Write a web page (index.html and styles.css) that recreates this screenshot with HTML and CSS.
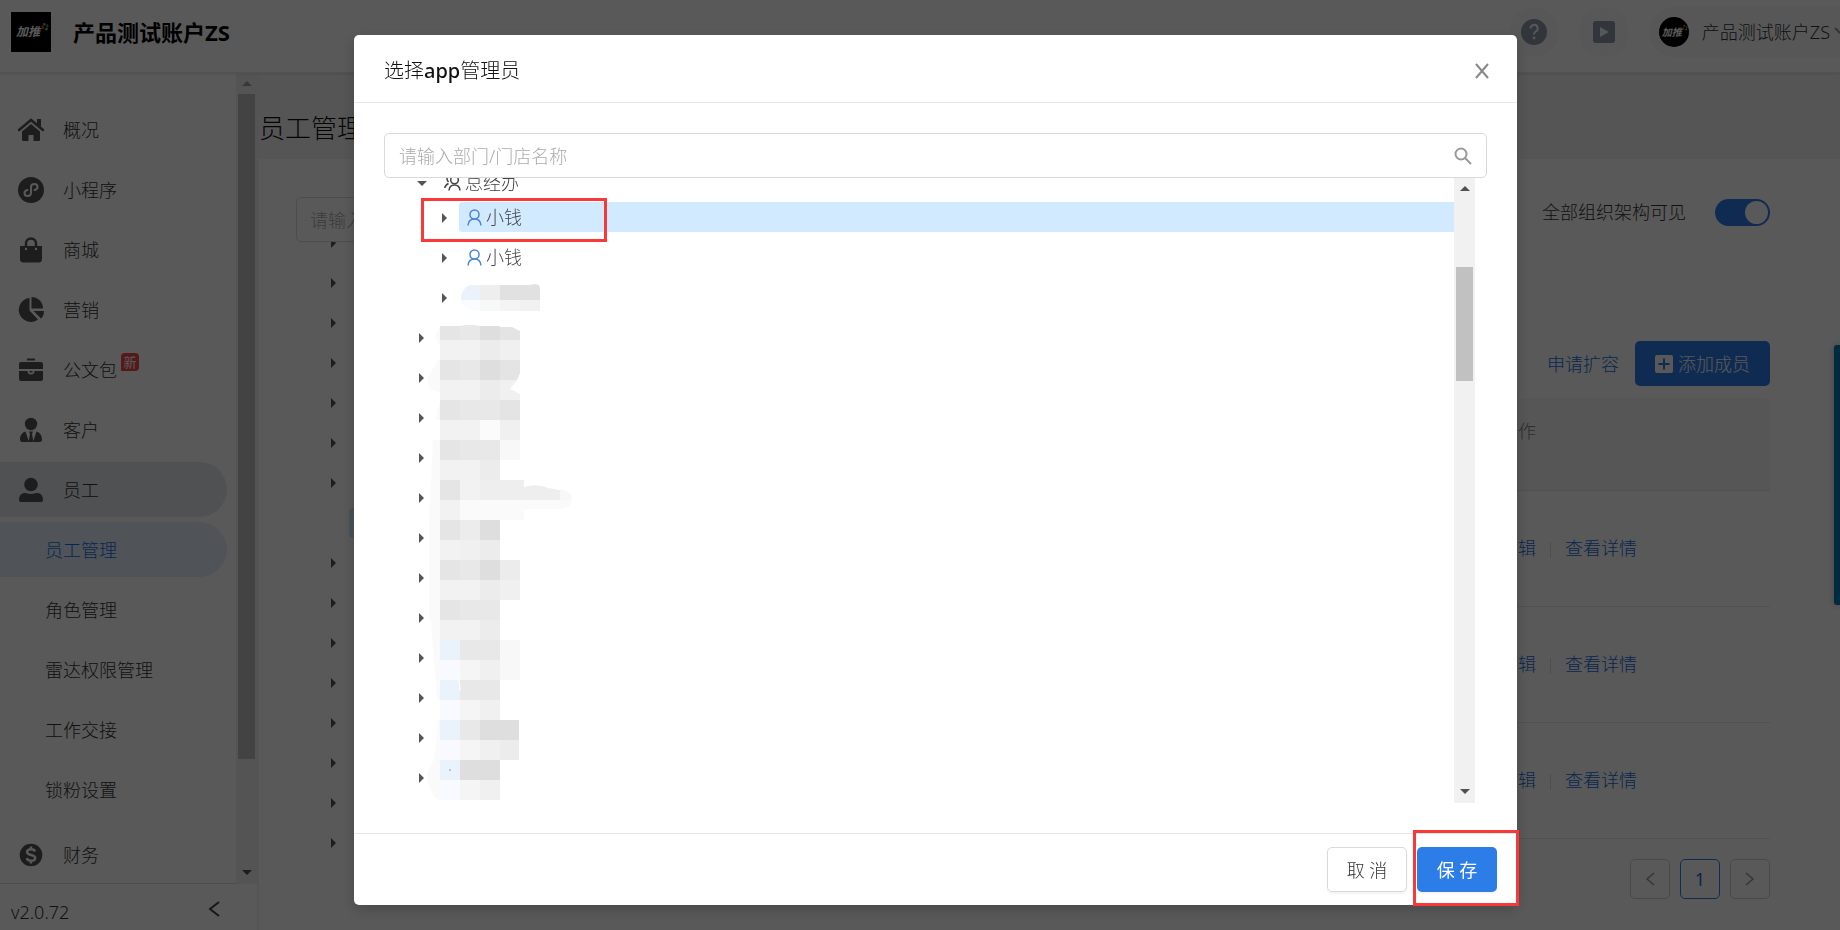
FILE: index.html
```html
<!DOCTYPE html>
<html lang="zh-CN">
<head>
    <meta charset="UTF-8">
    <meta name="viewport" content="width=device-width, initial-scale=1.0">
    <title>员工管理</title>
    <link rel="stylesheet" href="styles.css">
</head>
<body>
    <div class="app">
        <header class="header">
            <div class="logo"><span>加推</span>
                <svg class="logo-dot" viewBox="0 0 8 8"><path d="M2 1.500L4.500 1" stroke="#f80"/><path d="M5.500 1.500L7 4" stroke="#09d"/><path d="M6.500 5L4.500 7" stroke="#8c2"/><path d="M1 3L2.500 6" stroke="#e42"/></svg>
            </div>
            <h1>产品测试账户ZS</h1>
            <div class="header-right">
                <button class="round-button" aria-label="帮助">
                    <svg width="26" height="26" viewBox="0 0 26 26"><circle cx="13" cy="13" r="13" fill="#8f9bab"/><path d="M9.500 9.500a3.600 3.600 0 1 1 5.200 3.200c-1.200.7-1.700 1.200-1.700 2.800" fill="none" stroke="#fafafa" stroke-width="2"/><circle cx="13" cy="19" r="1.400" fill="#fafafa"/></svg>
                </button>
                <button class="round-button" aria-label="视频">
                    <svg width="22" height="22" viewBox="0 0 22 22"><rect width="22" height="22" rx="3" fill="#8f9bab"/><path d="M7 6l9 5-9 5z" fill="#fafafa"/></svg>
                </button>
                <button class="account">
                    <span class="avatar">加推
                        <svg class="logo-dot" viewBox="0 0 8 8"><path d="M2 1.500L4.500 1" stroke="#f80"/><path d="M5.500 1.500L7 4" stroke="#09d"/><path d="M6.500 5L4.500 7" stroke="#8c2"/><path d="M1 3L2.500 6" stroke="#e42"/></svg>
                    </span>
                    <span>产品测试账户ZS</span>
                    <svg class="caret" width="14" height="9" viewBox="0 0 14 9"><path d="M1 1l6 6 6-6" fill="none" stroke="#8f9bab" stroke-width="2"/></svg>
                </button>
            </div>
        </header>

        <div class="page">
            <aside class="sidebar">
                <div class="menu-wrap">
                    <nav class="menu">
                        <a href="#"><svg viewBox="0 0 28 28"><path d="M2 14L14 4l12 10" fill="none" stroke="#555" stroke-width="2.500" stroke-linecap="round"/><path d="M20 3h4v8l-4-3z"/><path d="M5 15.500L14 8l9 7.500V24a1 1 0 0 1-1 1h-5.500v-6h-5v6H6a1 1 0 0 1-1-1z"/></svg>概况</a>
                        <a href="#"><svg viewBox="0 0 28 28"><circle cx="14" cy="14" r="13"/><path d="M10.500 14c-2 .4-3 1.500-3 3a3 3 0 0 0 3 3c2 0 3.500-1.300 3.500-3.200v-5.600C14 9.300 15.500 8 17.500 8a3 3 0 0 1 3 3c0 1.500-1 2.600-3 3" fill="none" stroke="#fff" stroke-width="2" stroke-linecap="round"/></svg>小程序</a>
                        <a href="#"><svg viewBox="0 0 28 28"><path d="M9 11V7.500a5 5 0 0 1 10 0V11" fill="none" stroke="#555" stroke-width="2.500"/><path d="M3 10h22v13a3.500 3.500 0 0 1-3.500 3.500h-15A3.500 3.500 0 0 1 3 23z"/><g fill="#fff"><circle cx="9" cy="13" r="1.200"/><circle cx="19" cy="13" r="1.200"/></g></svg>商城</a>
                        <a href="#"><svg viewBox="0 0 28 28"><path d="M12.500 2v12.500l8.500 9A12 12 0 1 1 12.500 2z"/><path d="M14.500 1A11.500 11.500 0 0 1 26 12.500H14.500z"/><path d="M16.500 15H27c0 3-1 5.500-3 7.500z"/></svg>营销</a>
                        <a href="#"><svg viewBox="0 0 28 28"><path d="M10 2.500h8v2h-8zM4 6h20a2 2 0 0 1 2 2v5H2V8a2 2 0 0 1 2-2zM2 15h8.500a3.500 3.500 0 0 0 7 0H26v8a2 2 0 0 1-2 2H4a2 2 0 0 1-2-2z"/><path d="M12.500 15h3v1.500h-3z"/></svg>公文包<em class="badge">新</em></a>
                        <a href="#"><svg viewBox="0 0 28 28"><circle cx="14" cy="8" r="6.200"/><path d="M8.500 15.500L12 26H5.500A2.500 2.500 0 0 1 3 23.500c0-4 2-7 5.500-8zM19.500 15.500L16 26h6.500a2.500 2.500 0 0 0 2.500-2.500c0-4-2-7-5.500-8zM12 15.500h4l-1 2.500 1.500 8h-5L13 18z"/></svg>客户</a>
                        <a href="#" class="open"><svg viewBox="0 0 28 28"><circle cx="14" cy="8.500" r="6.800"/><path d="M2 24c0-4.500 2.500-7 6-7 2 0 3 1 6 1s4-1 6-1c3.500 0 6 2.500 6 7 0 1.300-.7 2-2 2H4c-1.300 0-2-.7-2-2z"/></svg>员工</a>
                        <a href="#" class="sub current">员工管理</a>
                        <a href="#" class="sub">角色管理</a>
                        <a href="#" class="sub">雷达权限管理</a>
                        <a href="#" class="sub">工作交接</a>
                        <a href="#" class="sub">锁粉设置</a>
                        <a href="#" class="finance"><svg viewBox="0 0 28 28"><circle cx="14" cy="14" r="11.300"/><path d="M18 10.500c-.5-1.500-2-2.200-4-2.200-2.300 0-4 1-4 2.700 0 4 8.200 2 8.200 6 0 1.700-1.800 2.800-4.200 2.800-2.200 0-3.800-.9-4.300-2.600M14 5.500v3M14 19.500v3" fill="none" stroke="#fff" stroke-width="2.400"/></svg>财务</a>
                    </nav>
                    <div class="scrollbar side-scroll"><i class="up"></i><div class="thumb"></div><i class="down"></i></div>
                </div>
                <div class="side-footer">
                    <span>v2.0.72</span>
                    <button aria-label="收起"><svg width="12" height="16" viewBox="0 0 12 16"><path d="M11 1L2 8l9 7" fill="none" stroke="#444" stroke-width="2"/></svg></button>
                </div>
            </aside>

            <main class="main">
                <h2>员工管理</h2>
                <div class="card">
                    <div class="departments">
                        <input type="text" placeholder="请输入部门名称" aria-label="部门名称">
                        <ul class="arrows">
                            <li></li><li></li><li></li><li></li><li></li><li></li><li></li>
                            <li class="picked"></li>
                            <li></li><li></li><li></li><li></li><li></li><li></li><li></li><li></li>
                        </ul>
                    </div>
                    <div class="members">
                        <div class="visible-row">
                            <label for="visible">全部组织架构可见</label>
                            <input type="checkbox" id="visible" class="switch" checked>
                        </div>
                        <div class="tools">
                            <a href="#">申请扩容</a>
                            <button class="add-button"><svg width="18" height="18" viewBox="0 0 18 18"><rect width="18" height="18" rx="2" fill="#fff"/><path d="M9 3.500v11M3.500 9h11" stroke="#2d7de9" stroke-width="2"/></svg>添加成员</button>
                        </div>
                        <table>
                            <thead><tr><th>操作</th></tr></thead>
                            <tbody>
                                <tr><td><a href="#">编辑</a><i></i><a href="#">查看详情</a></td></tr>
                                <tr><td><a href="#">编辑</a><i></i><a href="#">查看详情</a></td></tr>
                                <tr><td><a href="#">编辑</a><i></i><a href="#">查看详情</a></td></tr>
                            </tbody>
                        </table>
                        <div class="pager">
                            <button aria-label="上一页"><svg width="10" height="14" viewBox="0 0 10 14"><path d="M9 1L2 7l7 6"/></svg></button>
                            <button class="on">1</button>
                            <button aria-label="下一页"><svg width="10" height="14" viewBox="0 0 10 14"><path d="M1 1l7 6-7 6"/></svg></button>
                        </div>
                    </div>
                </div>
            </main>
        </div>
        <div class="side-tab"></div>
    </div>

    <div class="mask">
        <div class="modal" role="dialog" aria-labelledby="modal-title">
            <div class="modal-header">
                <h3 id="modal-title">选择<b>app</b>管理员</h3>
                <button class="close" aria-label="关闭"><svg width="14" height="16" viewBox="0 0 14 16"><path d="M1 1l12 14M13 1L1 15" stroke="#888" stroke-width="2"/></svg></button>
            </div>
            <div class="modal-body">
                <div class="search">
                    <input type="text" placeholder="请输入部门/门店名称" aria-label="部门/门店名称">
                    <svg width="18" height="18" viewBox="0 0 18 18"><circle cx="7" cy="7" r="5.500"/><path d="M11 11l6 6"/></svg>
                </div>
                <div class="tree-wrap">
                    <ul class="tree">
                        <li class="expanded"><button aria-label="收起"></button><span><svg width="17" height="16" viewBox="0 0 17 16"><circle cx="10.500" cy="5" r="3.800"/><path d="M5 15.500c.3-3.500 2.500-5.500 5.500-5.500s5.200 2 5.500 5.500M4.500 1C2.500 2.500 2.500 5 4.500 7M4.500 8.500C2.500 9.500 1 11 .8 13"/></svg>总经办</span></li>
                        <li class="child selected"><button aria-label="展开"></button><span><svg class="user" width="15" height="17" viewBox="0 0 15 17"><circle cx="7.500" cy="5.500" r="4.500"/><path d="M1 16.500c.3-4 2.800-6.500 6.500-6.500s6.200 2.500 6.500 6.500"/></svg>小钱</span></li>
                        <li class="child"><button aria-label="展开"></button><span><svg class="user" width="15" height="17" viewBox="0 0 15 17"><circle cx="7.500" cy="5.500" r="4.500"/><path d="M1 16.500c.3-4 2.800-6.500 6.500-6.500s6.200 2.500 6.500 6.500"/></svg>小钱</span></li>
                        <li class="child"><button aria-label="展开"></button></li>
                        <li><button aria-label="展开"></button></li>
                        <li><button aria-label="展开"></button></li>
                        <li><button aria-label="展开"></button></li>
                        <li><button aria-label="展开"></button></li>
                        <li><button aria-label="展开"></button></li>
                        <li><button aria-label="展开"></button></li>
                        <li><button aria-label="展开"></button></li>
                        <li><button aria-label="展开"></button></li>
                        <li><button aria-label="展开"></button></li>
                        <li><button aria-label="展开"></button></li>
                        <li><button aria-label="展开"></button></li>
                        <li><button aria-label="展开"></button></li>
                    </ul>
                    <!-- hidden department names, 20px blocks -->
                    <svg class="mosaic" width="160" height="520" viewBox="0 0 160 520">
                        <path fill="#eaf2fb" d="M60 5H50Q41 8 41 20H60z"/><path fill="#eeeeee" d="M60 5h20v15H60z"/><path fill="#e1e1e1" d="M80 5h30l4-1 5 1 1 3v12H80z"/>
                        <path fill="#fafcff" d="M41 20h19v11h-8q-9-2-11-11z"/><path fill="#f7f9f8" d="M60 20h20v11H60z"/><path fill="#f4f4f4" d="M80 20h20v11H80z"/><path fill="#f1f1f1" d="M100 20h20v11h-20z"/>

                        <path fill="#fafafa" d="M20 48q-6 6-4 12l4 5zM18 80L9 96q-3 10 3 14l8 2V80zM20 120l-4 20h4zM13 160h7v40h-9zM11 200h9v40H9zM9 240h11v100H9zM11 340h9v80h-3z"/>
                        <path fill="#e5e5e5" d="M20 46h20v14H20zM20 80h20v20H20zM20 120h20v20H20zM20 160h20v20H20zM20 200h20v20H20zM20 240h20v20H20zM20 280h20v20H20zM20 320h20v20H20z"/>
                        <path fill="#f2f2f2" d="M20 60h40v20H20zM20 100h40v20H20zM20 140h40v20H20zM20 180h40v20H20zM20 220h20v20H20zM20 260h40v20H20zM20 300h40v20H20zM20 340h40v20H20z"/>
                        <path fill="#e8e8e8" d="M40 46l6-1h8l6 1v14H40zM40 80h20v20H40zM40 120h40v20H40zM40 160h40v20H40zM40 280h20v20H40zM40 320h40v20H40zM40 360h40v20H40zM40 400h40v20H40zM40 440h20v20H40z"/>
                        <path fill="#dedede" d="M60 46h20v14H60zM60 80h20v20H60zM60 240h20v20H60zM60 280h20v20H60zM60 440h39v20H60zM40 480h40v20H40z"/>
                        <path fill="#ececec" d="M60 60h20v20H60zM60 100h20v20H60zM60 180h20v20H60zM40 240h20v20H40zM60 260h20v20H60zM60 300h20v20H60zM60 340h20v20H60zM80 280h20v20H80zM80 460h19v20H80z"/>
                        <path fill="#f0f0f0" d="M40 260h20v20H40z"/>
                        <path fill="#e4e4e4" d="M80 47h12l8 4v9H80zM80 80h20v13l-3 7H80zM80 120h20v20H80z"/>
                        <path fill="#f0f0f0" d="M80 60h20v20H80zM80 100h17l-7 9 10 5v6H80zM80 140h20v20H80zM60 380h20v20H60zM60 420h20v20H60zM60 460h20v20H60zM60 500h20v20H60zM80 300h20v20H80z"/>
                        <path fill="#fbfbfb" d="M60 140h20v20H60z"/><path fill="#f8f8f8" d="M80 160h20v20H80zM80 360h20v40H80z"/>
                        <path fill="#f2f2f2" d="M40 200h20v20H40z"/><path fill="#eeeeee" d="M60 200h44v7q14-4 24 1l12 2v10H60z"/><path fill="#f8f8f8" d="M140 209q13 3 12 11h-12z"/>
                        <path fill="#fafafa" d="M40 220h112q-2 8-11 9h-37v11H40z"/>
                        <path fill="#f5f5f5" d="M40 380h20v20H40zM40 420h20v20H40zM40 460h20v20H40zM40 500h20v20H40z"/>
                        <path fill="#eaf2fb" d="M20 360h20v20H20zM20 400h20v20H20zM20 440h20v20H20zM20 480h20v20H20z"/>
                        <path fill="#f8faff" d="M20 380h20v20H20zM20 420h20v20H20zM20 460h20v20H20zM20 500h20v20H20z"/>
                        <path fill="#fafafa" d="M18 440h2v80q-6-1-8-8-9-15-1-27 4-4 5-25z"/>
                        <path d="M39 396v5l1 6v4" fill="none" stroke="#fff"/><path d="M29 490h2" stroke="#6d9de0"/>
                    </svg>
                    <div class="scrollbar tree-scroll"><i class="up"></i><div class="thumb"></div><i class="down"></i></div>
                    <div class="mark mark-row"></div>
                </div>
            </div>
            <div class="modal-footer">
                <button class="cancel">取 消</button>
                <button class="save">保 存</button>
                <div class="mark mark-save"></div>
            </div>
        </div>
    </div>
</body>
</html>
```

FILE: styles.css
```css
* {
    box-sizing: border-box;
}
body {
    margin: 0;
    font-family: "Noto Sans", "Noto Sans CJK SC", sans-serif;
    font-size: 18px;
    font-weight: 300;
    line-height: 24px;
    color: #333;
    background: #fff;
    overflow: hidden;
}
h1, h2, h3, ul {
    margin: 0;
    padding: 0;
}
ul {
    list-style: none;
}
a {
    color: #1a6be0;
    text-decoration: none;
}
button, input {
    font: inherit;
    color: inherit;
}
button {
    display: flex;
    align-items: center;
    justify-content: center;
    padding: 0;
    border: none;
    background: none;
    white-space: nowrap;
}
svg {
    flex: none;
}
.app {
    display: flex;
    flex-direction: column;
    height: 100vh;
    overflow: hidden;
}

/* header */
.header {
    display: flex;
    align-items: center;
    flex: none;
    height: 73px;
    padding: 0 0 9px 11px;
    border-bottom: 1px solid #eaeaea;
    box-shadow: 0 1px 3px rgba(0, 0, 0, 0.1);
    z-index: 1;
}
.logo {
    position: relative;
    display: flex;
    align-items: center;
    justify-content: center;
    width: 40px;
    height: 40px;
    margin-right: 22px;
    padding-right: 6px;
    background: #000;
    color: #fff;
    font-size: 12px;
    font-style: italic;
    font-weight: 700;
}
.logo-dot {
    position: absolute;
    top: 11px;
    right: 2px;
    width: 8px;
    height: 8px;
    fill: none;
    stroke-width: 2;
}
.header h1 {
    font-size: 22px;
    font-weight: 700;
    color: #000;
}
.header-right {
    display: flex;
    gap: 20px;
    margin-left: auto;
}
.round-button {
    width: 50px;
    height: 50px;
    border-radius: 25px;
    background: #fafafa;
}
.account {
    gap: 13px;
    height: 50px;
    padding-left: 10px;
    margin-right: -8px;
    border-radius: 25px 0 0 25px;
    background: #fafafa;
}
.account .caret {
    margin-left: -9px;
}
.avatar {
    position: relative;
    width: 30px;
    height: 30px;
    padding-right: 4px;
    border-radius: 15px;
    background: #000;
    color: #fff;
    font-size: 10px;
    font-style: italic;
    font-weight: 700;
    line-height: 30px;
}
.avatar .logo-dot {
    top: 8px;
    right: 1px;
    width: 6px;
    height: 6px;
}

/* sidebar */
.page {
    display: flex;
    flex: 1;
    min-height: 0;
}
.sidebar {
    display: flex;
    flex-direction: column;
    flex: none;
    width: 259px;
    border-right: 2px solid #f0f0f0;
}
.menu-wrap {
    display: flex;
    flex: 1;
    min-height: 0;
}
.menu {
    display: flex;
    flex-direction: column;
    gap: 5px;
    flex: 1;
    padding-top: 29px;
    overflow: hidden;
    border-bottom: 1px solid #ddd;
}
.menu a {
    display: flex;
    align-items: center;
    flex: none;
    height: 55px;
    margin-right: 9px;
    padding-left: 17px;
    border-radius: 0 28px 28px 0;
    color: #333;
}
.menu svg {
    width: 28px;
    height: 28px;
    margin-right: 18px;
    fill: #555;
}
.menu .sub {
    padding-left: 45px;
}
.menu .open {
    background: #e6e9ed;
}
.menu .current {
    background: #e4efff;
    color: #1a6be0;
}
.menu .finance {
    margin-top: 5px;
}
.badge {
    align-self: flex-start;
    width: 18px;
    height: 18px;
    margin: 11px 0 0 4px;
    border-radius: 4px 4px 4px 0;
    background: #f5484d;
    color: #fff;
    font-size: 13px;
    font-style: normal;
    font-weight: 400;
    line-height: 18px;
    text-align: center;
}
.side-footer {
    display: flex;
    align-items: center;
    justify-content: space-between;
    flex: none;
    height: 46px;
    padding: 10px 37px 0 11px;
}
.side-footer button {
    margin-bottom: 6px;
}

/* scrollbars */
.scrollbar {
    display: flex;
    flex-direction: column;
    align-items: center;
    flex: none;
    width: 21px;
    background: #f1f1f1;
}
.scrollbar i {
    flex: none;
    height: 5px;
    margin: 8px 0;
    border: 5px solid transparent;
}
.scrollbar .up {
    border-top: none;
    border-bottom-color: #505050;
}
.scrollbar .down {
    margin: auto 0 9px;
    border-bottom: none;
    border-top-color: #505050;
}
.scrollbar .thumb {
    width: 17px;
    background: #c1c1c1;
}
.side-scroll .up {
    border-bottom-color: #a0a0a0;
}
.side-scroll .thumb {
    height: 82%;
}
.tree-scroll .thumb {
    height: 114px;
    margin-top: 68px;
}

/* page body */
.main {
    display: flex;
    flex-direction: column;
    flex: 1;
    min-width: 0;
    background: #f4f4f4;
}
.main h2 {
    height: 86px;
    padding-top: 37px;
    font-size: 26px;
    font-weight: 300;
    line-height: 36px;
    color: #111;
}
.card {
    display: flex;
    flex: 1;
    gap: 20px;
    padding: 38px 70px 0 37px;
    background: #fff;
}
.departments {
    width: 300px;
}
.departments input {
    position: relative;
    width: 100%;
    height: 45px;
    padding: 0 13px;
    border: 1px solid #d9d9d9;
    border-radius: 5px;
    background: #fff;
}
::placeholder {
    color: #aaa;
    opacity: 1;
}
.arrows {
    padding: 0 0 0 35px;
    margin-top: -19px;
}
.arrows li {
    height: 40px;
    padding-top: 15px;
}
.arrows li::before {
    content: "";
    display: block;
    width: 5px;
    border: 5px solid transparent;
    border-left-color: #555;
    border-right: none;
}
.arrows .picked {
    height: 30px;
    margin: 5px 0 5px 18px;
    border-radius: 3px;
    background: #d2eaff;
}
.arrows .picked::before {
    display: none;
}
.members {
    display: flex;
    flex-direction: column;
    flex: 1;
}
.visible-row, .tools {
    display: flex;
    align-items: center;
    justify-content: flex-end;
}
.visible-row {
    gap: 29px;
    height: 30px;
}
.switch {
    appearance: none;
    width: 55px;
    height: 27px;
    margin: 0;
    padding: 2px;
    border-radius: 14px;
    background: #2d7de9;
}
.switch::before {
    content: "";
    display: block;
    width: 23px;
    height: 23px;
    margin-left: auto;
    border-radius: 12px;
    background: #fff;
}
.tools {
    gap: 16px;
    margin-top: 114px;
}
.add-button {
    gap: 5px;
    width: 135px;
    height: 45px;
    border-radius: 5px;
    background: #2d7de9;
    color: #fff;
}
table {
    width: 100%;
    margin-top: 12px;
    border-collapse: separate;
    border-spacing: 0;
}
th {
    height: 93px;
    padding: 0 234px 26px 0;
    border-bottom: 1px solid #e8e8e8;
    border-radius: 5px 5px 0 0;
    background: #f7f7f7;
    font-weight: 300;
    text-align: right;
    color: #888;
}
td {
    height: 116px;
    padding: 0 133px 2px 0;
    border-bottom: 1px solid #e8e8e8;
    text-align: right;
}
td i {
    display: inline-block;
    width: 1px;
    height: 16px;
    margin: 0 14px;
    background: #e0e0e0;
    vertical-align: middle;
}
.pager {
    display: flex;
    justify-content: flex-end;
    gap: 10px;
    margin-top: 20px;
}
.pager button {
    width: 40px;
    height: 40px;
    border: 1px solid #d0d0d0;
    border-radius: 5px;
}
.pager svg {
    fill: none;
    stroke: #999;
    stroke-width: 1.5;
}
.pager .on {
    border-color: #2d7de9;
    color: #1a6be0;
    font-weight: 400;
}
.side-tab {
    position: absolute;
    top: 345px;
    right: 0;
    width: 6px;
    height: 260px;
    border-radius: 3px 0 0 3px;
    background: #0078ae;
    box-shadow: 0 0 6px rgba(0, 0, 0, 0.3);
}

/* dialog */
.mask {
    position: fixed;
    inset: 0;
    z-index: 10;
    display: flex;
    padding: 35px 323px 25px 354px;
    background: rgba(0, 0, 0, 0.65);
}
.modal {
    display: flex;
    flex-direction: column;
    flex: 1;
    border-radius: 5px;
    background: #fff;
    box-shadow: 0 5px 15px rgba(0, 0, 0, 0.2);
}
.modal-header {
    display: flex;
    align-items: center;
    justify-content: space-between;
    height: 68px;
    padding: 4px 28px 0 30px;
    border-bottom: 1px solid #e8e8e8;
}
.modal-header h3 {
    font-size: 20px;
    font-weight: 300;
    color: #111;
}
.modal-header b {
    font-weight: 500;
}
.modal-body {
    display: flex;
    flex-direction: column;
    flex: 1;
    min-height: 0;
    padding: 30px;
}
.search {
    display: flex;
    align-items: center;
    flex: none;
    height: 45px;
    padding-right: 14px;
    border: 1px solid #d9d9d9;
    border-radius: 5px;
}
.search input {
    flex: 1;
    height: 43px;
    padding: 0 14px;
    border: none;
    border-radius: 5px;
    background: none;
}
.search svg {
    fill: none;
    stroke: #999;
    stroke-width: 2;
}
.tree-wrap {
    position: relative;
    display: flex;
    flex: 1;
    min-height: 0;
    padding-right: 12px;
}
.tree {
    display: flex;
    flex-direction: column;
    gap: 10px;
    flex: 1;
    margin-bottom: 4px;
    padding-left: 35px;
    overflow: hidden;
    color: #444;
}
.tree li {
    display: flex;
    align-items: center;
    flex: none;
    gap: 12px;
    height: 30px;
}
.tree .expanded {
    gap: 9px;
    height: 20px;
    margin: -5px 0 -1px;
}
.tree .child {
    padding-left: 23px;
}
.tree button {
    margin-top: 2px;
}
.tree button::before {
    content: "";
    border: 5px solid transparent;
    border-left-color: #555;
    border-right: none;
}
.tree .expanded button {
    margin: 0 0 0 -2px;
}
.tree .expanded button::before {
    border: 5px solid transparent;
    border-top-color: #555;
    border-bottom: none;
}
.tree span {
    display: flex;
    align-items: center;
    flex: 1;
    gap: 4px;
    height: 30px;
    padding-left: 8px;
    border-radius: 3px 0 0 3px;
}
.tree .selected span {
    background: #d2eaff;
}
.tree svg {
    fill: none;
    stroke: #444;
    stroke-width: 1.5;
}
.tree .user {
    stroke: #4a86d8;
}
.mosaic {
    position: absolute;
    top: 102px;
    left: 36px;
}
.mark {
    position: absolute;
    border: 3px solid #fb3838;
}
.mark-row {
    top: 20px;
    left: 37px;
    width: 186px;
    height: 44px;
}
.modal-footer {
    position: relative;
    display: flex;
    justify-content: flex-end;
    gap: 10px;
    padding: 13px 20px;
    border-top: 1px solid #e8e8e8;
}
.modal-footer button {
    width: 80px;
    height: 45px;
    border-radius: 5px;
    box-shadow: 0 2px 2px rgba(0, 0, 0, 0.05);
}
.modal-footer .cancel {
    border: 1px solid #d9d9d9;
}
.modal-footer .save {
    background: #2d7de9;
    color: #fff;
    font-weight: 400;
}
.mark-save {
    top: -4px;
    right: -2px;
    width: 106px;
    height: 76px;
}
```
